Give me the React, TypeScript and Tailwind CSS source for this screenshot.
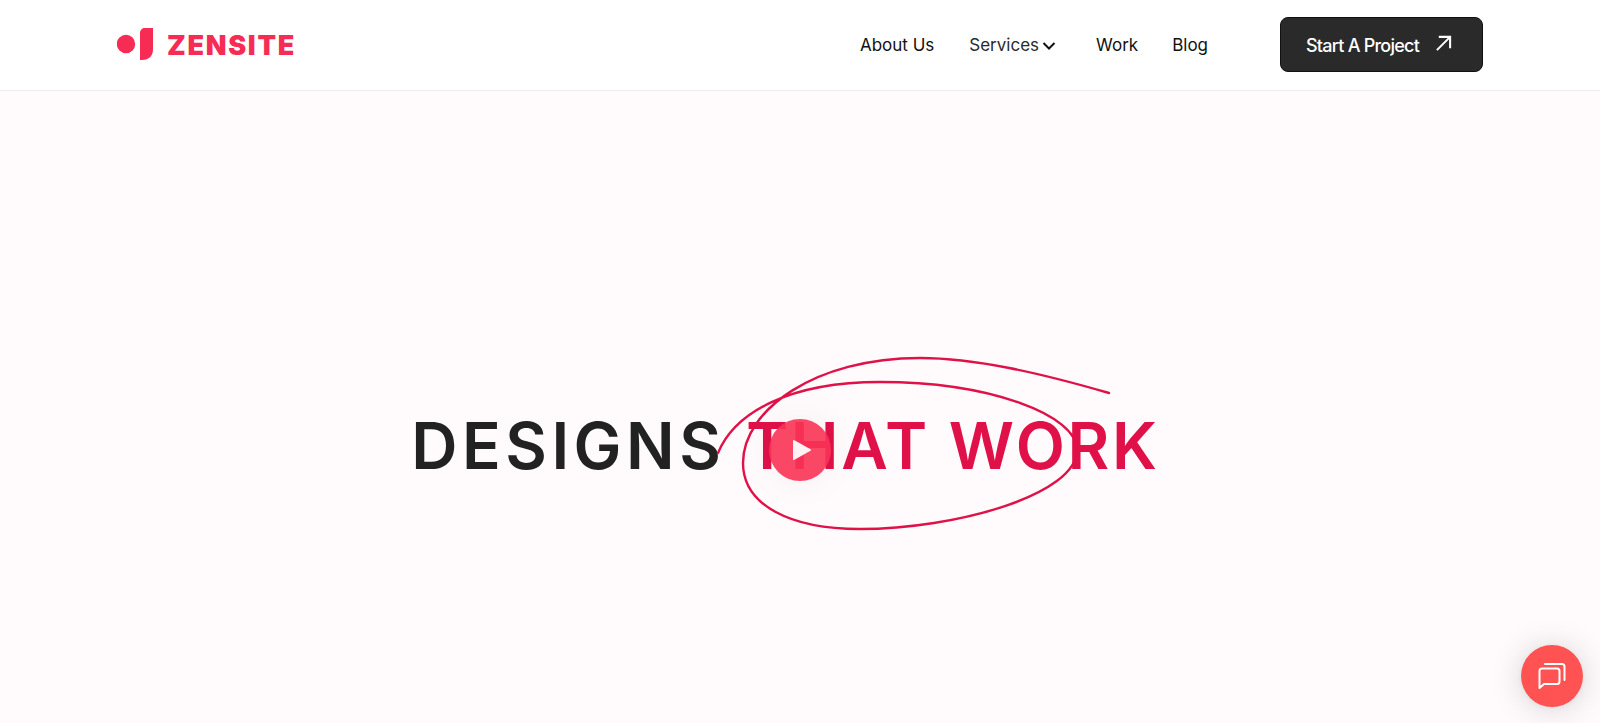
import React from "react";

function Logo() {
  return (
    <div className="flex items-center">
      <svg width="38" height="34" viewBox="0 0 38 34" className="block">
        <circle cx="9" cy="16" r="9.2" fill="#f72c55" />
        <path d="M28 0 H36 V21 C36 28 32 32 25 32 H23 V5 C23 2 25 0 28 0 Z" fill="#f72c55" />
      </svg>
      <span className="ml-[12px] text-[27px] leading-none font-black text-[#f72c55] tracking-[1.7px] font-['Inter',sans-serif]">ZENSITE</span>
    </div>
  );
}

export default function App() {
  return (
    <div className="h-[723px] overflow-hidden bg-[#fffbfc] font-['Inter',sans-serif]">
      <header className="flex h-[91px] items-center justify-between border-b border-[#efecee] bg-white pl-[117px] pr-[117px]">
        <Logo />
        <div className="flex items-center">
          <nav className="flex items-center pt-[2px] text-[17px] text-[#111111]">
            <a className="mr-[35px]">About Us</a>
            <a className="flex items-center text-[#2a2a2a]">
              Services
              <svg width="14" height="14" viewBox="0 0 14 14" className="ml-[3px]" fill="none" stroke="#111" strokeWidth="2">
                <path d="M1.5 4 L7 9.500 L12.500 4" />
              </svg>
            </a>
            <a className="ml-[40px]">Work</a>
            <a className="ml-[34px]">Blog</a>
          </nav>
          <button className="ml-[72px] mb-[2px] flex h-[55px] w-[203px] items-center justify-center rounded-lg border border-[#111] bg-[#2a2a2a] pt-[2px] pr-[5px] text-[18px] font-medium tracking-[-0.75px] text-white">
            Start A Project
            <svg width="17" height="17" viewBox="0 0 18 18" className="ml-[16px] mb-[4px]" fill="none" stroke="#fff" strokeWidth="2.2">
              <path d="M2 16 L16 2 M4 2 H16 V14" />
            </svg>
          </button>
        </div>
      </header>
      <main className="relative flex justify-center pt-[313px] pr-[29px]">
        <h1 className="text-[64px] leading-[84px] font-semibold text-[#222222]">
          <span className="tracking-[4.5px]">DESIGNS </span>
          <span className="tracking-[2.7px] text-[#e01148]">THAT WORK</span>
        </h1>
        <svg className="pointer-events-none absolute left-0 top-0" width="1600" height="632" viewBox="0 91 1600 632" fill="none">
          <path
            d="M718 453 C735 412 790 382 880 382 C990 382 1077 415 1077 450 C1077 495 955 529 860 529 C790 529 743 505 743 463 C743 410 815 358 920 358 C975 358 1040 373 1109 393"
            stroke="#e01148"
            strokeWidth="2.4"
            strokeLinecap="round"
          />
        </svg>
        <button className="absolute left-[769px] top-[328px] flex h-[62px] w-[62px] items-center justify-center rounded-full bg-[#fa3355]/90 shadow-[0_0_40px_rgba(0,0,0,0.05)]">
          <svg width="20" height="22" viewBox="0 0 20 22" className="ml-[3px]">
            <path d="M2 2 L18 11 L2 20 Z" fill="#fdf3f5" stroke="#fdf3f5" strokeWidth="2" strokeLinejoin="round" />
          </svg>
        </button>
      </main>
      <button className="fixed left-[1521px] top-[645px] flex h-[62px] w-[62px] items-center justify-center rounded-full bg-[#ff5252] shadow-[0_1px_6px_rgba(0,0,0,0.06),0_2px_32px_rgba(0,0,0,0.16)]">
        <svg width="28" height="28" viewBox="0 0 28 28" fill="none" stroke="#fff" strokeWidth="2" strokeLinejoin="round" strokeLinecap="round">
          <path d="M2 6.500 C2 5 3 4 4.500 4 H19.500 C21 4 22 5 22 6.500 V17 C22 18.500 21 19.500 19.500 19.500 H6.500 L2 23.500 Z" transform="translate(-0.500 2.500)" />
          <path d="M7 2 H24 C25.500 2 26.500 3 26.500 4.500 V18" />
        </svg>
      </button>
    </div>
  );
}
